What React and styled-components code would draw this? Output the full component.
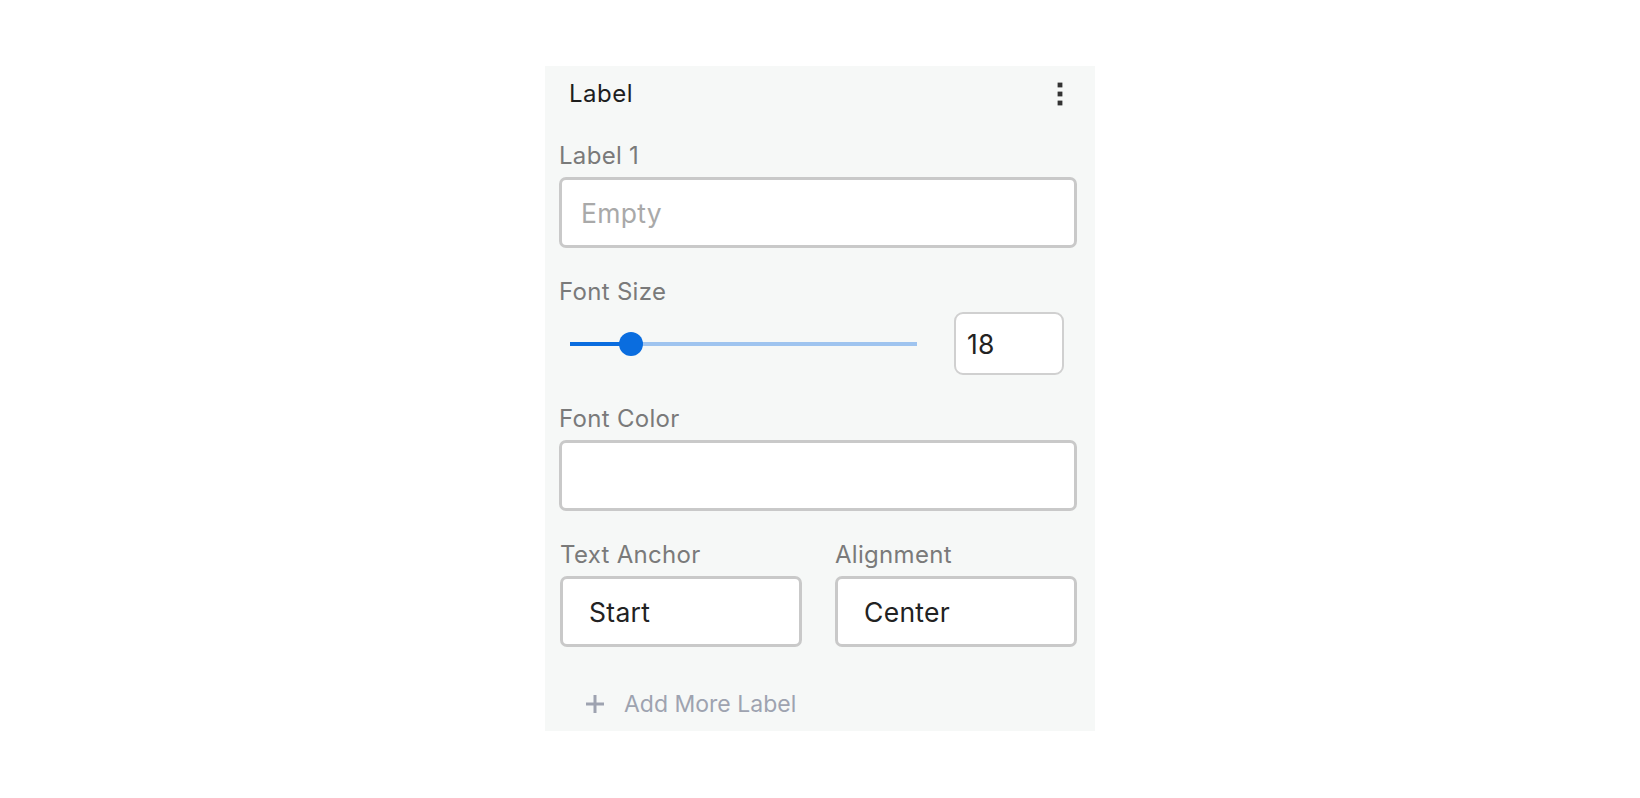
import styled, { createGlobalStyle } from 'styled-components';

const GlobalStyle = createGlobalStyle`
  * { box-sizing: border-box; }
  body {
    margin: 0;
    background: #ffffff;
    font-family: Inter, "Noto Sans", "Liberation Sans", sans-serif;
  }
`;

const Page = styled.div`
  display: flex;
  justify-content: center;
  padding-top: 66px;
`;

const Panel = styled.section`
  width: 550px;
  background: #f6f8f7;
  padding: 16px 18px 15px 14px;
  display: flex;
  flex-direction: column;
`;

const Header = styled.div`
  display: flex;
  align-items: center;
  justify-content: space-between;
  height: 24px;
  padding-left: 10px;
  margin-bottom: 38px;
`;

const Title = styled.h2`
  margin: 0;
  font-size: 24px;
  line-height: 24px;
  font-weight: 400;
  letter-spacing: 0.5px;
  color: #1e1e1e;
`;

const MenuButton = styled.button`
  display: flex;
  align-items: center;
  justify-content: center;
  width: 8px;
  height: 24px;
  margin-right: 13px;
  padding: 0;
  border: none;
  background: none;
  color: #333333;
`;

const Field = styled.div`
  display: flex;
  flex-direction: column;
  margin-bottom: ${p => p.$last ? '0' : '32px'};
  min-width: 0;
`;

const FieldLabel = styled.label`
  font-size: 24px;
  line-height: 24px;
  letter-spacing: 0.3px;
  color: #7a7a7a;
  margin-bottom: ${p => p.$gap || 9}px;
`;

const TextBox = styled.div`
  display: flex;
  align-items: center;
  height: 71px;
  padding-left: ${p => p.$indent || 19}px;
  background: #ffffff;
  border: 3px solid #c9c9c9;
  border-radius: 7px;
  font-size: 26.5px;
  line-height: 26px;
  letter-spacing: 0.3px;
  color: ${p => p.$placeholder ? '#a9a9a9' : '#222222'};
`;

const SliderRow = styled.div`
  display: flex;
  align-items: center;
  height: 63px;
`;

const SliderArea = styled.div`
  flex: 1;
  padding-left: 11px;
  margin-right: 37px;
`;

const Track = styled.div`
  position: relative;
  height: 4px;
  background: #9fc4ef;
`;

const TrackFill = styled.div`
  height: 100%;
  background: #0a6ddf;
`;

const Thumb = styled.div`
  position: absolute;
  top: 50%;
  width: 24px;
  height: 24px;
  margin: -12px 0 0 -12px;
  border-radius: 50%;
  background: #0a6ddf;
`;

const NumberBox = styled.div`
  display: flex;
  align-items: center;
  width: 110px;
  height: 63px;
  margin-right: 13px;
  padding-left: 11px;
  background: #ffffff;
  border: 2px solid #d0d0d0;
  border-radius: 9px;
  font-size: 26.5px;
  line-height: 26px;
  letter-spacing: 0.3px;
  color: #222222;
`;

const Columns = styled.div`
  display: grid;
  grid-template-columns: 1fr 1fr;
  column-gap: 33px;
  padding-left: 1px;
`;

const AddButton = styled.button`
  display: flex;
  align-items: center;
  gap: 20px;
  margin-top: 45px;
  padding: 0 0 0 27px;
  border: none;
  background: none;
  font-family: inherit;
  font-size: 23px;
  line-height: 24px;
  color: #9ea3b0;
  cursor: pointer;
`;

const KebabIcon = () => (
  <svg width="6" height="24" viewBox="0 0 6 24" fill="currentColor">
    <rect x="0.6" y="0.6" width="4.8" height="4.8" />
    <rect x="0.6" y="9.6" width="4.8" height="4.8" />
    <rect x="0.6" y="18.6" width="4.8" height="4.8" />
  </svg>
);

const PlusIcon = () => (
  <svg width="18" height="18" viewBox="0 0 18 18" stroke="currentColor" strokeWidth="3">
    <line x1="9" y1="0" x2="9" y2="18" />
    <line x1="0" y1="9" x2="18" y2="9" />
  </svg>
);

const Slider = ({ value, min = 0, max = 100 }) => {
  const pct = ((value - min) / (max - min)) * 100;
  return (
    <SliderArea>
      <Track>
        <TrackFill style={{ width: `${pct}%` }} />
        <Thumb style={{ left: `${pct}%` }} />
      </Track>
    </SliderArea>
  );
};

export default function App() {
  return (
    <>
      <GlobalStyle />
      <Page>
        <Panel>
          <Header>
            <Title>Label</Title>
            <MenuButton aria-label="More options">
              <KebabIcon />
            </MenuButton>
          </Header>

          <Field>
            <FieldLabel>Label 1</FieldLabel>
            <TextBox $placeholder>Empty</TextBox>
          </Field>

          <Field>
            <FieldLabel $gap={8}>Font Size</FieldLabel>
            <SliderRow>
              <Slider value={17.5} />
              <NumberBox>18</NumberBox>
            </SliderRow>
          </Field>

          <Field>
            <FieldLabel>Font Color</FieldLabel>
            <TextBox />
          </Field>

          <Columns>
            <Field $last>
              <FieldLabel>Text Anchor</FieldLabel>
              <TextBox $indent={26}>Start</TextBox>
            </Field>
            <Field $last>
              <FieldLabel>Alignment</FieldLabel>
              <TextBox $indent={26}>Center</TextBox>
            </Field>
          </Columns>

          <AddButton>
            <PlusIcon />
            Add More Label
          </AddButton>
        </Panel>
      </Page>
    </>
  );
}
